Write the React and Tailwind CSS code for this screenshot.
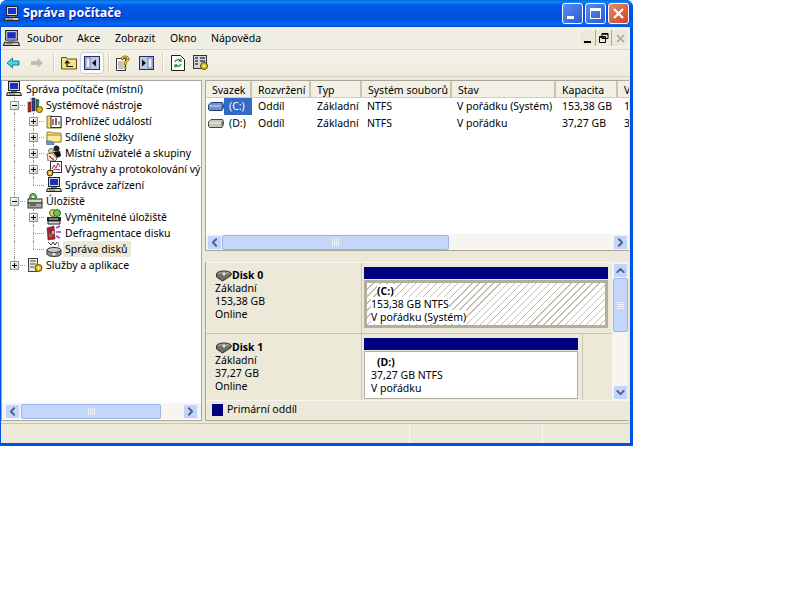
import { ChevronLeft, ChevronRight, ChevronUp, ChevronDown } from 'lucide-react'

const columns = [
  { label: 'Svazek', width: 'w-[46px]', edge: 'border-r-2' },
  { label: 'Rozvržení', width: 'w-[59px]', edge: 'border-r-2' },
  { label: 'Typ', width: 'w-[51px]', edge: 'border-r-2' },
  { label: 'Systém souborů', width: 'w-[90px]', edge: 'border-r-2' },
  { label: 'Stav', width: 'w-[104px]', edge: 'border-r-2' },
  { label: 'Kapacita', width: 'w-[62px]', edge: 'border-r-2' },
  { label: 'V', width: 'w-[12px]', edge: '' },
]

const volumes = [
  { name: '(C:)', selected: true, status: 'V pořádku (Systém)', size: '153,38 GB', free: '1' },
  { name: '(D:)', selected: false, status: 'V pořádku', size: '37,27 GB', free: '3' },
]

function Computer({ size = 16 }) {
  return (
    <svg width={size} height={size} viewBox="0 0 16 16">
      <rect x="2.5" y="0.5" width="11" height="9" fill="#d8d8d8" stroke="#222" />
      <rect x="4" y="2" width="8" height="6" fill="#1d2fc0" />
      <rect x="5" y="10" width="6" height="1" fill="#777" />
      <path d="M1.5 11.5h13l1 3h-15z" fill="#cfcfc4" stroke="#222" />
      <path d="M3 13h6" stroke="#666" />
    </svg>
  )
}

function Tools() {
  return (
    <svg width="16" height="16" viewBox="0 0 16 16">
      <rect x="1" y="5" width="3" height="10" fill="#b02a20" stroke="#401010" strokeWidth="0.5" />
      <rect x="5" y="1" width="3" height="13" fill="#3d3d8c" stroke="#111" strokeWidth="0.5" />
      <path d="M9 2l3 1-1 10-2 1z" fill="#2f7d4a" stroke="#111" strokeWidth="0.5" />
      <circle cx="12.5" cy="12.5" r="3" fill="#e0b820" stroke="#5a4a00" />
      <path d="M3 1l2 3" stroke="#888" />
    </svg>
  )
}

function EventViewer() {
  return (
    <svg width="16" height="16" viewBox="0 0 16 16">
      <path d="M1 3h5l1 1h8v11H1z" fill="#f0d878" stroke="#8a7430" />
      <rect x="5" y="3.5" width="10" height="11" fill="#fff" stroke="#333" />
      <path d="M7 6v6" stroke="#c03030" strokeWidth="1.5" />
      <path d="M10 5v7" stroke="#333060" strokeWidth="1.5" />
      <path d="M13 8v4" stroke="#b09020" strokeWidth="1.5" />
    </svg>
  )
}

function SharedFolder() {
  return (
    <svg width="16" height="16" viewBox="0 0 16 16">
      <path d="M1 3h5l1 1h8v9H1z" fill="#f5de80" stroke="#a08838" />
      <path d="M1 6h14v7H1z" fill="#fbeb9f" stroke="#a08838" />
      <path d="M0 12h5l3 2v2H1z" fill="#5aa0d8" stroke="#254a70" strokeWidth="0.5" />
    </svg>
  )
}

function Users() {
  return (
    <svg width="16" height="16" viewBox="0 0 16 16">
      <circle cx="10.5" cy="3.5" r="3" fill="#222" />
      <path d="M7 7l7-1 1 5-4 2z" fill="#111" />
      <circle cx="5" cy="6" r="2.4" fill="#f2d0a8" stroke="#222" strokeWidth="0.6" />
      <path d="M1 9l5-1 5 6-2 2H2z" fill="#f5f0e0" stroke="#222" strokeWidth="0.6" />
      <path d="M3 11l5 4" stroke="#c03020" strokeWidth="1.5" />
    </svg>
  )
}

function Alerts() {
  return (
    <svg width="16" height="16" viewBox="0 0 16 16">
      <rect x="4.5" y="0.5" width="11" height="11" fill="#fff" stroke="#333" />
      <path d="M6 8l2-4 2 3 2-5 2 4" fill="none" stroke="#c02040" />
      <path d="M6 10l3-2 5 1" fill="none" stroke="#2040c0" />
      <circle cx="4" cy="12" r="3" fill="#d8b020" stroke="#403000" />
      <circle cx="4" cy="12" r="1" fill="#fff" />
    </svg>
  )
}

function Storage() {
  return (
    <svg width="16" height="16" viewBox="0 0 16 16">
      <circle cx="6" cy="4" r="3.5" fill="#6cc060" stroke="#2a6a2a" />
      <circle cx="6" cy="4" r="1" fill="#fff" />
      <rect x="1" y="6" width="14" height="4" fill="#d8d8d0" stroke="#333" />
      <rect x="1" y="10" width="14" height="5" fill="#a8a89c" stroke="#333" />
      <path d="M3 12h6" stroke="#222" />
    </svg>
  )
}

function Removable() {
  return (
    <svg width="16" height="16" viewBox="0 0 16 16">
      <circle cx="7" cy="4" r="3.5" fill="#e8d050" stroke="#5a6a20" />
      <circle cx="11" cy="4" r="3.5" fill="#70c060" stroke="#2a6a2a" />
      <path d="M1 8h14v4H1z" fill="#222" />
      <path d="M2 12h12v3H2z" fill="#d8d8d0" stroke="#222" />
      <path d="M3 10h9" stroke="#ddd" />
    </svg>
  )
}

function Defrag() {
  return (
    <svg width="16" height="16" viewBox="0 0 16 16">
      <path d="M1 3l7-2 1 13-7 1z" fill="#b02030" stroke="#401018" strokeWidth="0.5" />
      <rect x="3" y="4" width="3" height="3" fill="#2a40c0" />
      <rect x="3" y="9" width="3" height="3" fill="#30a040" />
      <rect x="6" y="6" width="2" height="3" fill="#f0c020" />
      <path d="M10 3l4-2M10 7h5M10 11l4 2" stroke="#a040c0" strokeWidth="1.4" />
    </svg>
  )
}

function DiskManagement() {
  return (
    <svg width="16" height="16" viewBox="0 0 16 16">
      <path d="M2 1l3 3 2-3 2 3 2-3" fill="none" stroke="#333" />
      <path d="M12 1l1 5" stroke="#888" />
      <path d="M1 9v4c0 1.500 3 2.500 7 2.500s7-1 7-2.500V9" fill="#8f8f88" stroke="#333" />
      <ellipse cx="8" cy="9" rx="7" ry="2.500" fill="#c8c8c0" stroke="#333" />
      <circle cx="8" cy="13" r="1.500" fill="#eee" />
    </svg>
  )
}

function Services() {
  return (
    <svg width="16" height="16" viewBox="0 0 16 16">
      <rect x="1.500" y="1.500" width="9" height="13" fill="#e8e8dc" stroke="#444" />
      <path d="M3 4h6M3 7h6M3 10h4" stroke="#555" />
      <circle cx="11.500" cy="11" r="3.500" fill="#e0b820" stroke="#5a4a00" />
      <circle cx="11.500" cy="11" r="1.200" fill="#fff8d0" />
    </svg>
  )
}

function HardDisk({ selected }) {
  const body = selected ? '#6f93c8' : '#c4c4bc'
  return (
    <svg width="16" height="12" viewBox="0 0 16 12">
      <path d="M3 1.500h11.500l1 2v3l-1.500 3H1.500l-1-1V4z" fill={body} stroke={selected ? '#27407a' : '#444'} />
      <path d="M1 5h13" stroke={selected ? '#d0e0f8' : '#f4f4f0'} />
      <path d="M14 3.500v4" stroke={selected ? '#27407a' : '#444'} />
    </svg>
  )
}

function DiskIcon() {
  return (
    <svg width="17" height="12" viewBox="0 0 17 12">
      <ellipse cx="9" cy="4" rx="7.500" ry="3" fill="#9a9a90" stroke="#333" />
      <path d="M1.500 4v3l6 4 8-5V4" fill="#70706a" stroke="#333" />
      <circle cx="9" cy="4" r="1.500" fill="#e8e8e0" />
    </svg>
  )
}

function Expander({ open }) {
  return (
    <span className="relative w-[9px] h-[9px] border border-[#8a9aa8] bg-[linear-gradient(135deg,#ffffff,#d8d4c4)] flex items-center justify-center shrink-0">
      <span className="absolute w-[5px] h-px bg-black" />
      {!open && <span className="absolute w-px h-[5px] bg-black" />}
    </span>
  )
}

// one tree row: guide cells, then expander or elbow, then icon and label
function TreeRow({ guides = [], expander, last, Icon, label, selected }) {
  return (
    <div className="flex h-4 items-center whitespace-nowrap">
      <span className="w-[4px] shrink-0" />
      {guides.map((on, i) => (
        <span key={i} className="relative w-[19px] h-4 shrink-0">
          {on && <span className="absolute left-[8px] top-0 h-4 border-l border-dotted border-[#9a9a9a]" />}
        </span>
      ))}
      <span className="relative w-[19px] h-4 shrink-0 flex items-center">
        <span className={`absolute left-[8px] top-0 border-l border-dotted border-[#9a9a9a] ${last ? 'h-2' : 'h-4'}`} />
        <span className="absolute left-[8px] top-2 w-[11px] border-t border-dotted border-[#9a9a9a]" />
        {expander && (
          <span className="absolute left-[4px] top-[3.500px]">
            <Expander open={expander === 'open'} />
          </span>
        )}
      </span>
      <span className="ml-[2px] w-4 h-4 shrink-0 flex items-center">
        <Icon />
      </span>
      <span className={`ml-[1px] pl-[2px] pr-[3px] leading-4 ${selected ? 'bg-[#ece9d8]' : ''}`}>{label}</span>
    </div>
  )
}

function ScrollBtn({ children }) {
  return (
    <span className="w-[15px] h-[15px] shrink-0 rounded-[2px] border border-[#eef3fd] bg-[#c3d3fb] flex items-center justify-center text-[#4d6185]">
      {children}
    </span>
  )
}

function Grip({ vertical }) {
  return (
    <span className={`flex gap-px ${vertical ? 'flex-col' : ''}`}>
      {[0, 1, 2, 3].map((i) => (
        <span key={i} className={vertical ? 'w-[7px] h-px bg-[#eef3fd]' : 'w-px h-[7px] bg-[#eef3fd]'} />
      ))}
    </span>
  )
}

function ToolBtn({ children, className = '' }) {
  return <span className={`h-[22px] flex items-center justify-center ${className}`}>{children}</span>
}

function Sep({ className = '' }) {
  return <span className={`w-px h-[22px] bg-[#d8d4c0] border-r border-white box-content ${className}`} />
}

export default function App() {
  return (
    <div className="w-[800px] h-[600px] bg-white font-['Roboto',sans-serif] text-[10.5px] text-black">
      <div className="w-[633px] h-[446px] flex flex-col rounded-t-[7px] overflow-hidden bg-[#0054e3]">
        {/* Title bar */}
        <div className="h-[27px] shrink-0 flex items-center pl-[4px] pr-[4px] bg-[linear-gradient(180deg,#0a62dc_0%,#0a8af5_8%,#0058e8_20%,#0050e0_70%,#0a66f0_90%,#0050d8_100%)]">
          <Computer />
          <span className="ml-[3px] text-[12.5px] font-bold text-white [text-shadow:1px_1px_#0f1089]">Správa počítače</span>
          <div className="ml-auto flex gap-[2px]">
            <span className="w-[21px] h-[21px] rounded-[3px] border border-white bg-[linear-gradient(135deg,#5a8cf0,#2a5cd8)] flex items-end pl-[4px] pb-[4px]">
              <span className="w-[7px] h-[3px] bg-white" />
            </span>
            <span className="w-[21px] h-[21px] rounded-[3px] border border-white bg-[linear-gradient(135deg,#5a8cf0,#2a5cd8)] p-[4px]">
              <span className="block h-full border border-white border-t-[3px]" />
            </span>
            <span className="w-[21px] h-[21px] rounded-[3px] border border-white bg-[linear-gradient(135deg,#e88a68,#d8401c)] flex items-center justify-center">
              <svg width="13" height="13" viewBox="0 0 13 13">
                <path d="M2 2l9 9M11 2l-9 9" stroke="#fff" strokeWidth="2.200" />
              </svg>
            </span>
          </div>
        </div>

        <div className="flex-1 min-h-0 ml-[1px] mr-[3px] mb-[3px] flex flex-col bg-[#ece9d8]">
          {/* Menu bar */}
          <div className="h-[23px] shrink-0 flex items-center pl-[2px] bg-[#f0eee3] border-b border-[#dcd9c8]">
            <Computer size={17} />
            <span className="ml-[7px] w-[50px] pt-[2px]">Soubor</span>
            <span className="w-[38px] pt-[2px]">Akce</span>
            <span className="w-[55px] pt-[2px]">Zobrazit</span>
            <span className="w-[41px] pt-[2px]">Okno</span>
            <span className="pt-[2px]">Nápověda</span>
            <div className="ml-auto flex mr-[1px] bg-[#ece9d8] border border-[#f6f5ee]">
              <span className="w-4 h-[16px] border-r border-[#aca899] flex items-end justify-center pb-[3px]">
                <span className="w-[7px] h-[2px] bg-black" />
              </span>
              <span className="w-4 h-[16px] border-r border-[#aca899] flex items-center justify-center">
                <svg width="10" height="10" viewBox="0 0 10 10">
                  <path d="M3 .5h6v5H3zM.5 3.500h6v6h-6z" fill="none" stroke="#000" />
                  <path d="M3 1h6M1 4h5" stroke="#000" strokeWidth="1.400" />
                </svg>
              </span>
              <span className="w-4 h-[16px] flex items-center justify-center">
                <svg width="9" height="9" viewBox="0 0 9 9">
                  <path d="M1 1l7 7M8 1l-7 7" stroke="#aca899" strokeWidth="1.500" />
                </svg>
              </span>
            </div>
          </div>

          {/* Toolbar */}
          <div className="h-[27px] shrink-0 flex items-center pl-[5px] pb-[1px] bg-[linear-gradient(180deg,#f4f2e8,#eeebdc)] border-b border-[#d8d4c0]">
            <svg width="14" height="12" viewBox="0 0 14 12">
              <path d="M6.500 1L1 6l5.500 5V8H13V4H6.500z" fill="#43d6e8" stroke="#20808c" />
            </svg>
            <svg className="ml-[10px]" width="14" height="12" viewBox="0 0 14 12">
              <path d="M7.500 1L13 6l-5.500 5V8H1V4h6.500z" fill="#bdbdb4" />
            </svg>
            <Sep className="ml-[9px]" />
            <ToolBtn className="ml-[6px] w-4">
              <svg width="16" height="14" viewBox="0 0 16 14">
                <path d="M.5 1.500h5l1 1.500h9v10H.5z" fill="#f8e080" stroke="#5a5010" />
                <path d="M6 11V6M4 7.500L6 5l2.500 2.500M6 10.500h6" fill="none" stroke="#111" strokeWidth="1.200" />
              </svg>
            </ToolBtn>
            <ToolBtn className="ml-[3px] w-[24px] rounded-[3px] border border-[#c8d0e4] bg-[#fbfaf5]">
              <svg width="16" height="14" viewBox="0 0 16 14">
                <rect x=".5" y=".5" width="15" height="13" fill="#bcc8e8" stroke="#1f2f70" />
                <rect x="2" y="2" width="4" height="10" fill="#eef" stroke="#1f2f70" strokeWidth=".5" />
                <path d="M12 3.500v7L8 7z" fill="#111" />
              </svg>
            </ToolBtn>
            <Sep className="ml-[4px]" />
            <ToolBtn className="ml-[5px] w-4">
              <svg width="16" height="16" viewBox="0 0 16 16">
                <path d="M1.500 3.500h9v12h-9z" fill="#fff" stroke="#333" />
                <path d="M3 7h5M3 9h5M3 11h5M3 13h5" stroke="#888" />
                <path d="M6 4c0-4 8-4 8 0 0 3-3 2.500-3 5v1h-2V8c0-2 3-2 3-4s-4-2-4 1z" fill="#f0d020" stroke="#5a4a00" strokeWidth=".7" />
                <rect x="9" y="11.500" width="2" height="2" fill="#f0d020" stroke="#5a4a00" strokeWidth=".5" />
              </svg>
            </ToolBtn>
            <ToolBtn className="ml-[8px] w-[15px]">
              <svg width="15" height="14" viewBox="0 0 15 14">
                <rect x=".5" y=".5" width="14" height="13" fill="#bcc8e8" stroke="#1f2f70" />
                <rect x="9" y="2" width="4" height="10" fill="#eef" stroke="#1f2f70" strokeWidth=".5" />
                <path d="M3 3.500v7L7 7z" fill="#111" />
              </svg>
            </ToolBtn>
            <Sep className="ml-[8px]" />
            <ToolBtn className="ml-[6px] w-[15px]">
              <svg width="14" height="16" viewBox="0 0 14 16">
                <path d="M.5.500h9l4 4v11H.5z" fill="#fff" stroke="#222" />
                <path d="M4 7c1-3 5-3 6-1M10 3.500V6H7.500" fill="none" stroke="#2a9a3a" strokeWidth="1.300" />
                <path d="M10 9c-1 3-5 3-6 1M4 12.500V10h2.500" fill="none" stroke="#2a9a3a" strokeWidth="1.300" />
              </svg>
            </ToolBtn>
            <ToolBtn className="ml-[8px] w-4">
              <svg width="16" height="16" viewBox="0 0 16 16">
                <rect x=".5" y=".5" width="13" height="13" fill="#d8d8d0" stroke="#333" />
                <path d="M2 3h3M7 3h5M2 6h3M7 6h5M2 9h3" stroke="#2f3f7a" strokeWidth="1.300" />
                <circle cx="11" cy="11" r="3.500" fill="#e0c020" stroke="#5a4a00" />
                <circle cx="11" cy="11" r="1" fill="#fff" />
              </svg>
            </ToolBtn>
          </div>

          {/* Panes */}
          <div className="flex-1 min-h-0 flex pt-[3px]">
            <div className="w-[201px] h-[341px] shrink-0 flex flex-col bg-white border border-[#a8a698]">
              <div className="flex-1 min-h-0 overflow-hidden">
                <div className="flex h-4 items-center pl-[4px]">
                  <Computer />
                  <span className="ml-[4px] pt-[2px]">Správa počítače (místní)</span>
                </div>
                <TreeRow expander="open" Icon={Tools} label="Systémové nástroje" />
                <TreeRow guides={[true]} expander="closed" Icon={EventViewer} label="Prohlížeč událostí" />
                <TreeRow guides={[true]} expander="closed" Icon={SharedFolder} label="Sdílené složky" />
                <TreeRow guides={[true]} expander="closed" Icon={Users} label="Místní uživatelé a skupiny" />
                <TreeRow guides={[true]} expander="closed" Icon={Alerts} label="Výstrahy a protokolování vý" />
                <TreeRow guides={[true]} last Icon={Computer} label="Správce zařízení" />
                <TreeRow expander="open" Icon={Storage} label="Úložiště" />
                <TreeRow guides={[true]} expander="closed" Icon={Removable} label="Vyměnitelné úložiště" />
                <TreeRow guides={[true]} Icon={Defrag} label="Defragmentace disku" />
                <TreeRow guides={[true]} last Icon={DiskManagement} label="Správa disků" selected />
                <TreeRow last expander="closed" Icon={Services} label="Služby a aplikace" />
              </div>
              <div className="mb-[1px] h-4 shrink-0 flex items-center px-[3px] bg-[#f6f5ef]">
                <ScrollBtn><ChevronLeft size={13} strokeWidth={3.500} /></ScrollBtn>
                <span className="ml-[1px] w-[140px] h-[15px] rounded-[2px] border border-[#9ab4ea] bg-[#c5d6fb] flex items-center justify-center">
                  <Grip />
                </span>
                <span className="flex-1" />
                <ScrollBtn><ChevronRight size={13} strokeWidth={3.500} /></ScrollBtn>
              </div>
            </div>

            <div className="ml-[3px] mr-[1px] flex-1 min-w-0 h-[341px] flex flex-col">
              {/* Volume list */}
              <div className="h-[171px] shrink-0 flex flex-col bg-white border border-[#a8a698] border-r-0">
                <div className="h-[17px] shrink-0 flex overflow-hidden bg-[#f2f0e4] border-b border-[#d0cdb8]">
                  {columns.map((c) => (
                    <span key={c.label} className={`${c.width} ${c.edge} shrink-0 pl-[6px] leading-[18px] border-[#c8c5b2] whitespace-nowrap`}>
                      {c.label}
                    </span>
                  ))}
                </div>
                <div className="flex-1 min-h-0 overflow-hidden">
                  {volumes.map((v) => (
                    <div key={v.name} className="h-[17px] flex items-center whitespace-nowrap overflow-hidden">
                      <span className="w-[46px] shrink-0 flex items-center pl-[2px]">
                        <HardDisk selected={v.selected} />
                        <span className={`flex-1 h-[17px] pl-[5px] leading-[17px] ${v.selected ? 'bg-[#316ac5] text-white' : ''}`}>{v.name}</span>
                      </span>
                      <span className="w-[59px] shrink-0 pl-[6px]">Oddíl</span>
                      <span className="w-[51px] shrink-0 pl-[6px]">Základní</span>
                      <span className="w-[90px] shrink-0 pl-[5px]">NTFS</span>
                      <span className="w-[104px] shrink-0 pl-[5px]">{v.status}</span>
                      <span className="w-[62px] shrink-0 pl-[6px]">{v.size}</span>
                      <span className="pl-[6px]">{v.free}</span>
                    </div>
                  ))}
                </div>
                <div className="h-4 shrink-0 flex items-center bg-[#f6f5ef] px-[1px]">
                  <ScrollBtn><ChevronLeft size={13} strokeWidth={3.500} /></ScrollBtn>
                  <span className="w-[227px] h-[15px] shrink-0 rounded-[2px] border border-[#9ab4ea] bg-[#c5d6fb] flex items-center justify-center">
                    <Grip />
                  </span>
                  <span className="flex-1" />
                  <ScrollBtn><ChevronRight size={13} strokeWidth={3.500} /></ScrollBtn>
                </div>
              </div>

              {/* Disk graph */}
              <div className="mt-[11px] flex-1 min-h-0 flex flex-col border border-[#a8a698] border-r-0 border-t-[#f6f5ee]">
                <div className="flex-1 min-h-0 flex">
                  <div className="flex-1 min-w-0 flex flex-col overflow-hidden">
                    <div className="h-[71px] shrink-0 flex border-b border-[#c8c5b2]">
                      <div className="w-[156px] shrink-0 pl-[9px] pt-[6px] leading-[13px] border-r border-[#c8c5b2]">
                        <div className="flex items-center h-[13px] font-bold">
                          <DiskIcon />
                          <span>Disk 0</span>
                        </div>
                        <div>Základní</div>
                        <div>153,38 GB</div>
                        <div>Online</div>
                      </div>
                      <div className="pl-[2px] pt-[4px] w-[246px] shrink-0">
                        <div className="h-[12px] bg-[#000080]" />
                        <div className="mt-[1px] h-[48px] border-[3px] border-[#b2af9e] pl-[4px] pt-[2px] leading-[13px] bg-[repeating-linear-gradient(135deg,#ffffff_0px,#ffffff_4px,#c0beb2_4px,#c0beb2_5px)]">
                          <div className="pl-[6px] font-bold"><span className="bg-white">(C:)</span></div>
                          <div><span className="bg-white">153,38 GB NTFS</span></div>
                          <div><span className="bg-white">V pořádku (Systém)</span></div>
                        </div>
                      </div>
                    </div>
                    <div className="flex-1 min-h-0 flex">
                      <div className="w-[156px] shrink-0 pl-[9px] pt-[7px] leading-[13px] border-r border-[#c8c5b2]">
                        <div className="flex items-center h-[13px] font-bold">
                          <DiskIcon />
                          <span>Disk 1</span>
                        </div>
                        <div>Základní</div>
                        <div>37,27 GB</div>
                        <div>Online</div>
                      </div>
                      <div className="pl-[2px] pr-[4px] pt-[4px] w-[221px] shrink-0 border-r border-[#c8c5b2]">
                        <div className="h-[12px] bg-[#000080]" />
                        <div className="mt-[1px] h-[48px] border border-[#b2af9e] bg-white pl-[6px] pt-[4px] leading-[13px]">
                          <div className="pl-[6px] font-bold">(D:)</div>
                          <div>37,27 GB NTFS</div>
                          <div>V pořádku</div>
                        </div>
                      </div>
                    </div>
                  </div>
                  <div className="w-4 shrink-0 flex flex-col items-center bg-[#f6f5ef] mr-[1px]">
                    <ScrollBtn><ChevronUp size={13} strokeWidth={3.500} /></ScrollBtn>
                    <span className="w-[15px] h-[54px] rounded-[2px] border border-[#9ab4ea] bg-[#c5d6fb] flex items-center justify-center">
                      <Grip vertical />
                    </span>
                    <span className="flex-1" />
                    <ScrollBtn><ChevronDown size={13} strokeWidth={3.500} /></ScrollBtn>
                  </div>
                </div>
                <div className="h-[20px] shrink-0 flex items-center pl-[6px] pb-[2px] border-t border-[#f6f5ee]">
                  <span className="w-[11px] h-[12px] bg-[#000080]" />
                  <span className="ml-[4px]">Primární oddíl</span>
                </div>
              </div>
            </div>
          </div>

          {/* Status bar */}
          <div className="h-[20px] shrink-0 mt-[2px] flex border-t border-[#c8c5b2] bg-[#ece9d8]">
            <span className="w-[409px] border-r border-[#f8f7f0]" />
            <span className="w-[133px] border-r border-[#f8f7f0]" />
          </div>
        </div>
      </div>
    </div>
  )
}
